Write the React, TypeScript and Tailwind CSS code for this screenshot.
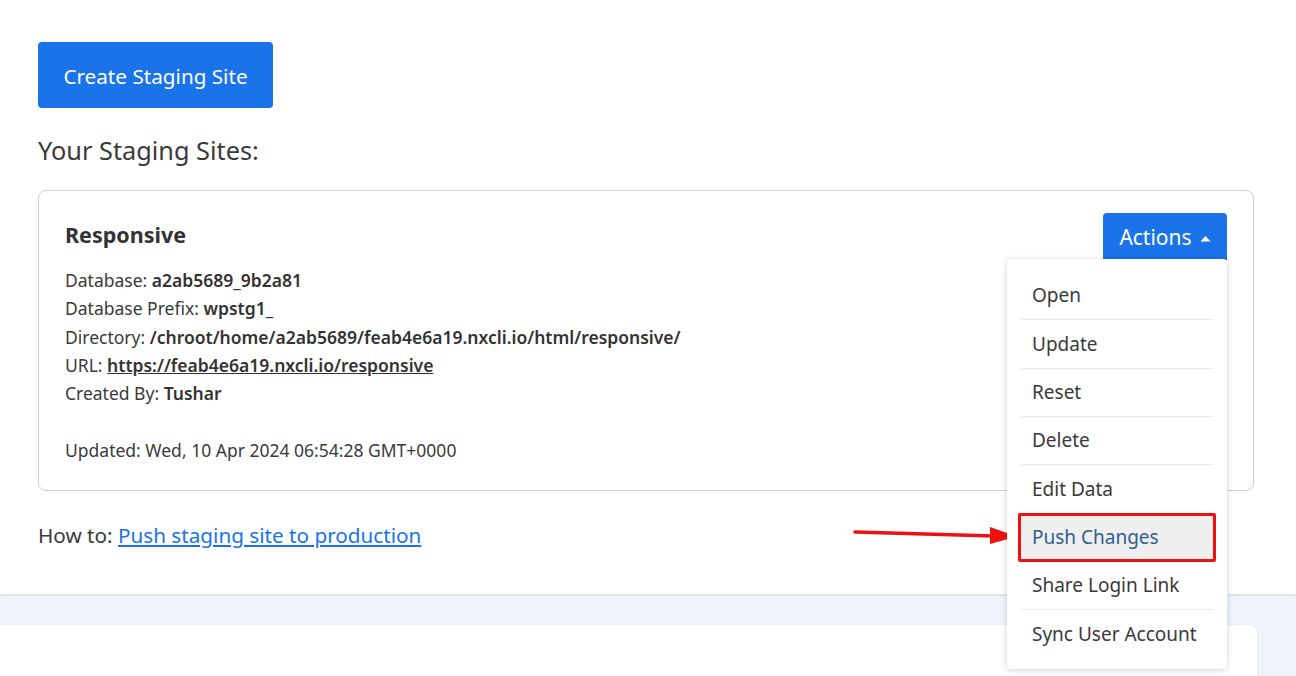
import { useState } from "react";

type Site = {
  name: string;
  database: string;
  prefix: string;
  directory: string;
  url: string;
  createdBy: string;
  updated: string;
};

const site: Site = {
  name: "Responsive",
  database: "a2ab5689_9b2a81",
  prefix: "wpstg1_",
  directory: "/chroot/home/a2ab5689/feab4e6a19.nxcli.io/html/responsive/",
  url: "https://feab4e6a19.nxcli.io/responsive",
  createdBy: "Tushar",
  updated: "Wed, 10 Apr 2024 06:54:28 GMT+0000",
};

const actions = [
  "Open",
  "Update",
  "Reset",
  "Delete",
  "Edit Data",
  "Push Changes",
  "Share Login Link",
  "Sync User Account",
];

function ActionsMenu() {
  const [open] = useState(true);
  return (
    <div className="relative">
      <button
        type="button"
        className="flex h-[47px] w-[124px] items-center justify-center gap-2 rounded-t-[4px] bg-[#1a73e8] pt-[2px] text-[21px] text-white"
      >
        Actions
        <svg width="11" height="7" viewBox="0 0 11 7" className="mt-[1px]">
          <path d="M0.5 6.5 L5.5 1 L10.5 6.5 Z" fill="#fff" />
        </svg>
      </button>
      {open && (
        <div className="absolute right-0 top-[46px] z-10 w-[220px] rounded-[4px] bg-white px-[14px] pb-[11px] pt-[13px] shadow-[0_1px_6px_rgba(0,0,0,0.18)]">
          {actions.map((a, i) => {
            const active = a === "Push Changes";
            return (
              <div
                key={a}
                className={`relative flex h-[48.3px] items-center px-[11px] text-[19px] ${
                  active ? "bg-[#efefef] text-[#2e6090]" : "text-[#3a3a3a]"
                } ${i < actions.length - 1 && !active && actions[i + 1] !== "Push Changes" ? "border-b border-[#ececec]" : ""}`}
              >
                {a}
                {active && (
                  <span className="pointer-events-none absolute inset-x-[-3px] inset-y-0 rounded-[2px] border-[3px] border-[#ee1111]" />
                )}
              </div>
            );
          })}
        </div>
      )}
    </div>
  );
}

export default function App() {
  return (
    <div
      className="relative h-[676px] w-[1296px] overflow-hidden bg-[#eff4fb] text-[#3a3a3a]"
      style={{ fontFamily: '"Noto Sans", "Open Sans", sans-serif' }}
    >
      <div className="bg-white px-[38px] pb-[45px] pt-[42px] shadow-[0_1px_3px_rgba(0,0,0,0.12)]">
        <button
          type="button"
          className="h-[66px] w-[235px] rounded-[4px] bg-[#1a73e8] pt-[3px] text-[20.7px] text-white"
        >
          Create Staging Site
        </button>
        <h2 className="mt-[26px] text-[25.3px] leading-[32px] text-[#3a3a3a]">
          Your Staging Sites:
        </h2>
        <div className="mt-[24px] flex w-[1216px] justify-between rounded-[8px] border border-[#cfcfcf] px-[26px] pb-[25px] pt-[22px]">
          <div>
            <div className="mt-[7px] text-[21.5px] font-bold leading-[30px] text-[#333]">
              {site.name}
            </div>
            <div className="mt-[16px] text-[17.5px] leading-[28.3px]">
              <div>
                Database: <b className="font-semibold text-[#333]">{site.database}</b>
              </div>
              <div>
                Database Prefix: <b className="font-semibold text-[#333]">{site.prefix}</b>
              </div>
              <div>
                Directory: <b className="font-semibold text-[#333]">{site.directory}</b>
              </div>
              <div>
                URL:{" "}
                <a className="font-semibold text-[#333] underline" href="#">
                  {site.url}
                </a>
              </div>
              <div>
                Created By: <b className="font-semibold text-[#333]">{site.createdBy}</b>
              </div>
              <div className="mt-[29px]">Updated: {site.updated}</div>
            </div>
          </div>
          <ActionsMenu />
        </div>
        <div className="mt-[30px] text-[20.7px] leading-[28px]">
          How to:{" "}
          <a href="#" className="text-[#1a73e8] underline">
            Push staging site to production
          </a>
        </div>
      </div>
      <div className="mt-[31px] h-[60px] w-[1257px] rounded-tr-[8px] bg-white shadow-[0_0_2px_rgba(0,0,0,0.08)]" />
      <svg
        className="absolute left-[852px] top-[524px]"
        width="168"
        height="22"
        viewBox="0 0 168 22"
      >
        <line x1="3" y1="8" x2="142" y2="12" stroke="#ee1111" strokeWidth="3.5" strokeLinecap="round" />
        <path d="M138 3 L165 12.5 L138 20 Z" fill="#ee1111" />
      </svg>
    </div>
  );
}
